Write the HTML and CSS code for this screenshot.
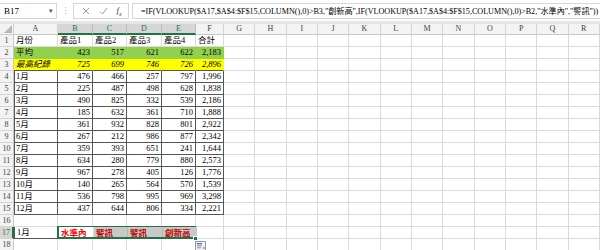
FILE: index.html
```html
<!DOCTYPE html>
<html lang="zh-Hant">
<head>
<meta charset="utf-8">
<link rel="stylesheet" href="styles.css">
</head>
<body>
<div class="app">
  <div class="fbar">
    <div class="namebox"><span class="nb-text">B17</span><span class="nb-dd">&#9662;</span></div>
    <div class="grip">&#8942;</div>
    <div class="fbtns">
      <svg class="ico" width="8" height="8" viewBox="0 0 8 8"><path d="M1 1L7 7M7 1L1 7" stroke="#9a9a9a" stroke-width="1" fill="none"/></svg>
      <svg class="ico" width="9" height="8" viewBox="0 0 9 8"><path d="M1 4.5L3.5 7L8 1" stroke="#9a9a9a" stroke-width="1" fill="none"/></svg>
      <span class="fx">f<sub>x</sub></span>
    </div>
    <div class="formula">=IF(VLOOKUP($A17,$A$4:$F$15,COLUMN(),0)&gt;B3,"創新高",IF(VLOOKUP($A17,$A$4:$F$15,COLUMN(),0)&gt;B2,"水準內","警訊"))</div>
  </div>
  <div class="sheet">
    <div class="corner"><svg width="8" height="8" viewBox="0 0 8 8"><path d="M8 0V8H0Z" fill="#b8b8b8"/></svg></div>
    <div class="ch">A</div><div class="ch sel">B</div><div class="ch sel">C</div><div class="ch sel">D</div><div class="ch sel">E</div><div class="ch">F</div>
    <div class="ch">G</div><div class="ch">H</div><div class="ch">I</div><div class="ch">J</div><div class="ch">K</div><div class="ch">L</div><div class="ch">M</div><div class="ch">N</div><div class="ch">O</div><div class="ch">P</div><div class="ch">Q</div><div class="ch">R</div>

    <div class="rh">1</div><div class="c t">月份</div><div class="c t">產品1</div><div class="c t">產品2</div><div class="c t">產品3</div><div class="c t">產品4</div><div class="c t">合計</div><div class="fill"></div>

    <div class="rh">2</div><div class="c t g">平均</div><div class="c n g">423</div><div class="c n g">517</div><div class="c n g">621</div><div class="c n g">622</div><div class="c n g">2,183</div><div class="fill"></div>

    <div class="rh">3</div><div class="c t y">最高紀錄</div><div class="c n y">725</div><div class="c n y">699</div><div class="c n y">746</div><div class="c n y">726</div><div class="c n y">2,896</div><div class="fill"></div>

    <div class="rh">4</div><div class="c t b first">1月</div><div class="c n b">476</div><div class="c n b">466</div><div class="c n b">257</div><div class="c n b">797</div><div class="c n b">1,996</div><div class="fill"></div>
    <div class="rh">5</div><div class="c t b first">2月</div><div class="c n b">225</div><div class="c n b">487</div><div class="c n b">498</div><div class="c n b">628</div><div class="c n b">1,838</div><div class="fill"></div>
    <div class="rh">6</div><div class="c t b first">3月</div><div class="c n b">490</div><div class="c n b">825</div><div class="c n b">332</div><div class="c n b">539</div><div class="c n b">2,186</div><div class="fill"></div>
    <div class="rh">7</div><div class="c t b first">4月</div><div class="c n b">185</div><div class="c n b">632</div><div class="c n b">361</div><div class="c n b">710</div><div class="c n b">1,888</div><div class="fill"></div>
    <div class="rh">8</div><div class="c t b first">5月</div><div class="c n b">361</div><div class="c n b">932</div><div class="c n b">828</div><div class="c n b">801</div><div class="c n b">2,922</div><div class="fill"></div>
    <div class="rh">9</div><div class="c t b first">6月</div><div class="c n b">267</div><div class="c n b">212</div><div class="c n b">986</div><div class="c n b">877</div><div class="c n b">2,342</div><div class="fill"></div>
    <div class="rh">10</div><div class="c t b first">7月</div><div class="c n b">359</div><div class="c n b">393</div><div class="c n b">651</div><div class="c n b">241</div><div class="c n b">1,644</div><div class="fill"></div>
    <div class="rh">11</div><div class="c t b first">8月</div><div class="c n b">634</div><div class="c n b">280</div><div class="c n b">779</div><div class="c n b">880</div><div class="c n b">2,573</div><div class="fill"></div>
    <div class="rh">12</div><div class="c t b first">9月</div><div class="c n b">967</div><div class="c n b">278</div><div class="c n b">405</div><div class="c n b">126</div><div class="c n b">1,776</div><div class="fill"></div>
    <div class="rh">13</div><div class="c t b first">10月</div><div class="c n b">140</div><div class="c n b">265</div><div class="c n b">564</div><div class="c n b">570</div><div class="c n b">1,539</div><div class="fill"></div>
    <div class="rh">14</div><div class="c t b first">11月</div><div class="c n b">536</div><div class="c n b">798</div><div class="c n b">995</div><div class="c n b">969</div><div class="c n b">3,298</div><div class="fill"></div>
    <div class="rh">15</div><div class="c t b first">12月</div><div class="c n b">437</div><div class="c n b">644</div><div class="c n b">806</div><div class="c n b">334</div><div class="c n b">2,221</div><div class="fill"></div>

    <div class="rh">16</div><div class="c"></div><div class="c"></div><div class="c"></div><div class="c"></div><div class="c"></div><div class="c"></div><div class="fill"></div>

    <div class="rh sel">17</div><div class="c t boxed">1月</div>
    <div class="selrange">
      <div class="r active">水準內</div><div class="r shade">警訊</div><div class="r shade">警訊</div><div class="r shade">創新高</div>
      <span class="handle"></span>
      <svg class="paste" width="11" height="10" viewBox="0 0 11 10"><rect x="0.5" y="0.5" width="10" height="9" fill="#f4f4f4" stroke="#9a9a9a"/><rect x="2" y="2" width="5" height="1.3" fill="#2b7cd3"/><rect x="2" y="4.3" width="5" height="1" fill="#8a8a8a"/><rect x="2" y="6.3" width="4" height="1" fill="#8a8a8a"/><path d="M7.5 6.5h2.5l-1.25 1.5z" fill="#555"/></svg>
    </div>
    <div class="c"></div><div class="fill"></div>

    <div class="rh">18</div><div class="c"></div><div class="c"></div><div class="c"></div><div class="c"></div><div class="c"></div><div class="c"></div><div class="fill"></div>
  </div>
</div>
</body>
</html>
```

FILE: styles.css
```css
html, body {
  margin: 0;
  padding: 0;
  background: #ffffff;
}
body {
  width: 600px;
  height: 250px;
  overflow: hidden;
  font-family: "Liberation Serif", "Noto Sans CJK TC", serif;
  font-size: 8.5px;
  color: #000;
}
.app {
  display: flex;
  flex-direction: column;
}
.fbar {
  height: 21px;
  display: flex;
  align-items: center;
  background: #ffffff;
  border-bottom: 3px solid #e6e6e6;
  box-sizing: content-box;
}
.namebox {
  width: 57px;
  height: 16px;
  box-sizing: border-box;
  border: 1px solid #d6d6d6;
  border-left: none;
  display: flex;
  align-items: center;
  justify-content: space-between;
  padding: 0 3px 0 4px;
  font-family: "Liberation Serif", serif;
  font-size: 9px;
}
.nb-dd {
  font-size: 7px;
  color: #555;
}
.grip {
  width: 16px;
  text-align: center;
  color: #b0b0b0;
  font-size: 9px;
}
.fbtns {
  width: 56px;
  height: 16px;
  box-sizing: border-box;
  border: 1px solid #d6d6d6;
  display: flex;
  align-items: center;
  justify-content: space-around;
  padding: 0 2px 0 4px;
}
.fx {
  font-family: "Liberation Serif", serif;
  font-style: italic;
  font-size: 9px;
  color: #444;
}
.fx sub {
  font-size: 6px;
}
.formula {
  flex: 1;
  min-width: 0;
  height: 16px;
  margin-left: 3px;
  box-sizing: border-box;
  border: 1px solid #d6d6d6;
  border-right: none;
  display: flex;
  align-items: center;
  padding-left: 8px;
  white-space: nowrap;
  font-size: 8.15px;
  letter-spacing: -0.02px;
}
.sheet {
  display: grid;
  grid-template-columns: 14px 44px 35px 34px 35px 34px 28px repeat(12, 31.33px);
  grid-template-rows: 11px;
  grid-auto-rows: 12px;
  position: relative;
}
.corner {
  background: #f3f3f3;
  border-right: 1px solid #cfcfcf;
  border-bottom: 1px solid #cfcfcf;
  box-sizing: border-box;
  display: flex;
  align-items: flex-end;
  justify-content: flex-end;
  padding: 0 1px 1px 0;
}
.ch {
  background: #f3f3f3;
  border-right: 1px solid #d4d4d4;
  border-bottom: 1px solid #c8c8c8;
  box-sizing: border-box;
  text-align: center;
  line-height: 10px;
  font-size: 8px;
  color: #444;
}
.ch.sel {
  background: #d6d6d6;
  color: #217346;
  border-bottom: 2px solid #217346;
  border-right-color: #bdbdbd;
}
.rh {
  background: #f3f3f3;
  border-right: 1px solid #c8c8c8;
  border-bottom: 1px solid #d4d4d4;
  box-sizing: border-box;
  text-align: center;
  line-height: 11px;
  font-size: 8px;
  color: #444;
}
.rh.sel {
  background: #d6d6d6;
  color: #217346;
  border-right: 2px solid #217346;
}
.c {
  box-sizing: border-box;
  border-right: 1px solid #dadada;
  border-bottom: 1px solid #dadada;
  line-height: 11px;
  white-space: nowrap;
  overflow: hidden;
  padding: 0 2px;
}
.t {
  text-align: left;
}
.n {
  text-align: right;
}
.g {
  background: #92d050;
  border-color: #92d050;
}
.y {
  background: #ffff00;
  border-right-color: #ffff00;
  border-bottom-color: #555;
  font-style: italic;
}
.b {
  border-right-color: #555;
  border-bottom-color: #555;
}
.b.first {
  box-shadow: inset 1px 0 0 #555;
}
.boxed {
  border: 1px solid #555;
  border-top: none;
}
.fill {
  grid-column: 8 / -1;
  box-sizing: border-box;
  border-bottom: 1px solid #dadada;
  background: repeating-linear-gradient(to right, transparent 0, transparent 30.33px, #dadada 30.33px, #dadada 31.33px);
}
.selrange {
  grid-column: 3 / 7;
  display: grid;
  grid-template-columns: 35px 34px 35px 34px;
  position: relative;
  box-sizing: border-box;
  border: 2px solid #217346;
  margin: -1px 0 0 -1px;
  height: 13px;
}
.r {
  margin-top: -1px;
  line-height: 11px;
  font-family: "Noto Sans CJK TC", sans-serif;
  font-weight: bold;
  padding-left: 2px;
  white-space: nowrap;
  overflow: hidden;
  border-right: 1px solid #b8b8b8;
}
.r.active {
  color: #ff0000;
  background: #ffffff;
  border-right: 1px solid #dadada;
}
.r.shade {
  color: #c40000;
  background: #c8c8c8;
}
.r:last-of-type {
  border-right: none;
}
.handle {
  position: absolute;
  right: -4px;
  bottom: -4px;
  width: 5px;
  height: 5px;
  background: #217346;
  border: 1px solid #fff;
  box-sizing: border-box;
}
.paste {
  position: absolute;
  right: -12px;
  top: 13px;
}
```
